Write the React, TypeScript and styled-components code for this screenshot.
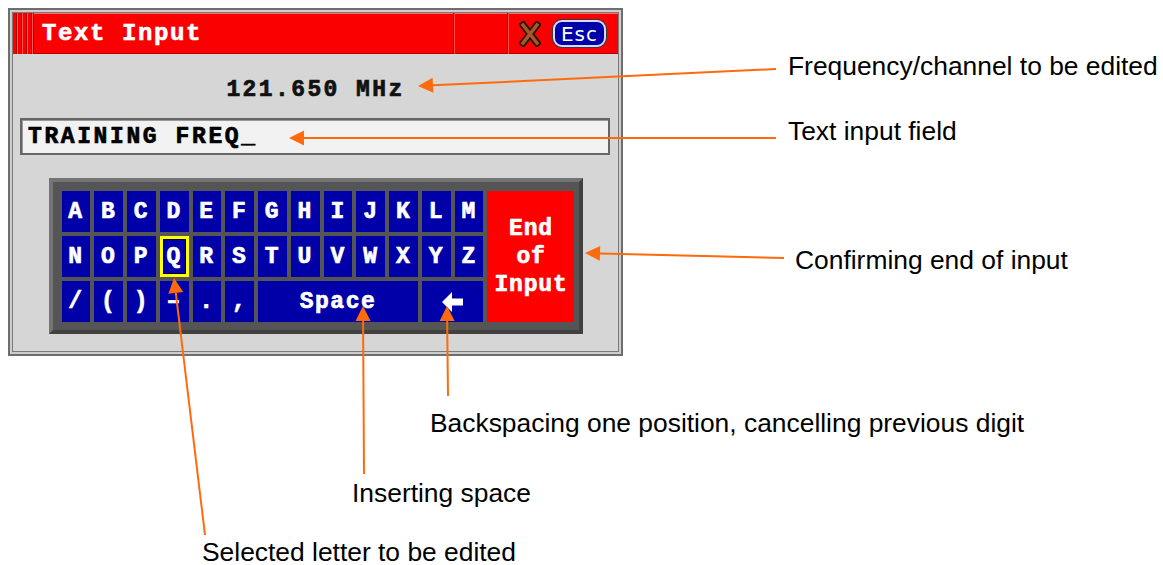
import React from 'react';
import styled, { createGlobalStyle, css } from 'styled-components';

const ORANGE = '#ff6a0d';
const KEY_BLUE = '#0000a8';
const RED = '#fb0000';
const PIXEL_FONT = `"Liberation Mono", "DejaVu Sans Mono", monospace`;

// the device font is a heavy bitmap face, so thicken the mono glyphs a little
const pixelText = css`
  font-family: ${PIXEL_FONT};
  font-weight: bold;
  -webkit-text-stroke: 0.7px currentColor;
`;

const row1 = 'ABCDEFGHIJKLM'.split('');
const row2 = 'NOPQRSTUVWXYZ'.split('');
const row3 = ['/', '(', ')', '–', '.', ','];

type Point = [number, number];
type Callout = { text: string; x: number; y: number; from: Point; to: Point };

// leader lines go from the label (from) to the arrow tip on the screen (to)
const callouts: Callout[] = [
  { text: 'Frequency/channel to be edited', x: 788, y: 51, from: [776, 69], to: [418, 86] },
  { text: 'Text input field', x: 788, y: 116, from: [776, 138], to: [289, 138] },
  { text: 'Confirming end of input', x: 795, y: 245, from: [784, 258], to: [585, 253] },
  {
    text: 'Backspacing one position, cancelling previous digit',
    x: 430,
    y: 408,
    from: [448, 396],
    to: [447, 306],
  },
  { text: 'Inserting space', x: 352, y: 478, from: [364, 474], to: [363, 306] },
  { text: 'Selected letter to be edited', x: 202, y: 537, from: [205, 535], to: [174, 278] },
];

const App: React.FC = () => {
  return (
    <Page>
      <GlobalStyle />
      <Window>
        <TitleBar>
          <Grip />
          <Title>Text Input</Title>
          <TitleSegment />
          <Controls>
            <CloseIcon width="22" height="26" viewBox="0 0 22 26">
              <path d="M4 4 L18 22 M18 4 L4 22" stroke="#2b1406" strokeWidth="7" strokeLinecap="square" />
              <path d="M4 4 L18 22 M18 4 L4 22" stroke="#a5582a" strokeWidth="3.4" strokeLinecap="square" />
            </CloseIcon>
            <EscButton>Esc</EscButton>
          </Controls>
        </TitleBar>
        <Content>
          <Frequency>121.650 MHz</Frequency>
          <InputField>TRAINING FREQ_</InputField>
          <KeyboardFrame>
            <KeyGrid>
              <EndKey>
                <span>End</span>
                <span>of</span>
                <span>Input</span>
              </EndKey>
              {row1.map((k) => (
                <Key key={k}>{k}</Key>
              ))}
              {row2.map((k) => (
                <Key key={k} $selected={k === 'Q'}>
                  {k}
                </Key>
              ))}
              {row3.map((k) => (
                <Key key={k}>{k}</Key>
              ))}
              <Key $span={5}>Space</Key>
              <Key $span={2}>
                <svg width="21" height="20" viewBox="0 0 21 20">
                  <path d="M0 10 L10 0 L10 6.5 L21 6.5 L21 13.5 L10 13.5 L10 20 Z" fill="#fff" />
                </svg>
              </Key>
            </KeyGrid>
          </KeyboardFrame>
        </Content>
      </Window>

      <Leaders width="1163" height="565">
        {callouts.map((c) => (
          <Arrow key={c.text} from={c.from} to={c.to} />
        ))}
      </Leaders>
      {callouts.map((c) => (
        <Label key={c.text} $x={c.x} $y={c.y}>
          {c.text}
        </Label>
      ))}
    </Page>
  );
};

const Arrow: React.FC<{ from: Point; to: Point }> = ({ from, to }) => {
  const [x1, y1] = from;
  const [x2, y2] = to;
  const len = Math.hypot(x2 - x1, y2 - y1);
  const ux = (x2 - x1) / len;
  const uy = (y2 - y1) / len;
  const head = 15;
  const half = 7.5;
  const bx = x2 - ux * head;
  const by = y2 - uy * head;
  const px = -uy;
  const py = ux;
  return (
    <g>
      <line x1={x1} y1={y1} x2={bx} y2={by} stroke={ORANGE} strokeWidth="2" />
      <polygon
        points={`${x2},${y2} ${bx + px * half},${by + py * half} ${bx - px * half},${by - py * half}`}
        fill={ORANGE}
      />
    </g>
  );
};

export default App;

const GlobalStyle = createGlobalStyle`
  html, body {
    margin: 0;
    padding: 0;
    background: #fff;
  }
  body {
    overflow: hidden;
    font-family: "Liberation Sans", Arial, sans-serif;
  }
`;

const Page = styled.div`
  position: relative;
  width: 1163px;
  height: 565px;
  padding: 8px;
  box-sizing: border-box;
  background: #fff;
`;

const Window = styled.div`
  width: 615px;
  height: 348px;
  box-sizing: border-box;
  display: flex;
  flex-direction: column;
  border: 2px solid #6e6e6e;
  padding: 3px;
  background: #d6d6d6;
  box-shadow: inset 0 0 0 2px #cdcdcd, inset 0 0 0 3px #7a7a7a;
`;

const TitleBar = styled.div`
  display: flex;
  height: 41px;
  background: ${RED};
  box-shadow: inset 0 1px 0 #ff6a6a, inset 0 -1px 0 #b80000;
`;

const Grip = styled.div`
  width: 20px;
  border-right: 1px solid #a80000;
  background: repeating-linear-gradient(
    90deg,
    ${RED} 0 3px,
    #b00000 3px 4px,
    #ff5a5a 4px 5px
  );
`;

const Title = styled.div`
  flex: 1;
  display: flex;
  align-items: center;
  padding-left: 8px;
  color: #fff;
  font-size: 24px;
  letter-spacing: 1.6px;
  ${pixelText};
`;

const TitleSegment = styled.div`
  width: 53px;
  border-left: 1px solid #a80000;
  box-shadow: inset 1px 0 0 #ff5050;
`;

const Controls = styled.div`
  width: 111px;
  display: flex;
  align-items: center;
  gap: 12px;
  padding-left: 11px;
  box-sizing: border-box;
  border-left: 1px solid #a80000;
  box-shadow: inset 1px 0 0 #ff5050;
`;

const CloseIcon = styled.svg`
  display: block;
  margin-top: 1px;
`;

const EscButton = styled.span`
  width: 53px;
  height: 27px;
  box-sizing: border-box;
  display: flex;
  align-items: center;
  justify-content: center;
  background: ${KEY_BLUE};
  border: 2px solid #d8d8ff;
  border-radius: 9px;
  box-shadow: 0 0 0 1px #3a3a3a;
  color: #fff;
  font: 20px "DejaVu Sans", sans-serif;
  letter-spacing: 1px;
`;

const Content = styled.div`
  flex: 1;
  display: flex;
  flex-direction: column;
`;

const Frequency = styled.div`
  height: 64px;
  box-sizing: border-box;
  padding-top: 8px;
  display: flex;
  align-items: center;
  justify-content: center;
  color: #111;
  font-size: 23px;
  letter-spacing: 2.4px;
  ${pixelText};
`;

const InputField = styled.div`
  height: 37px;
  margin: 0 8px 0 7px;
  box-sizing: border-box;
  display: flex;
  align-items: center;
  padding-left: 6px;
  background: #f2f2f2;
  border: 2px solid #666;
  box-shadow: inset 1px 1px 0 #9a9a9a;
  color: #000;
  font-size: 23px;
  letter-spacing: 2.6px;
  ${pixelText};
`;

const KeyboardFrame = styled.div`
  align-self: center;
  width: 534px;
  height: 156px;
  margin-top: 23px;
  box-sizing: border-box;
  padding: 9px 4px 8px 9px;
  background: #555;
  border: 4px solid;
  border-color: #747474 #414141 #414141 #747474;
`;

const KeyGrid = styled.div`
  display: grid;
  grid-template-columns: repeat(13, 1fr) 87px;
  grid-template-rows: repeat(3, 41px);
  gap: 4px;
`;

const Key = styled.div<{ $span?: number; $selected?: boolean }>`
  grid-column: span ${(p) => p.$span ?? 1};
  display: flex;
  align-items: center;
  justify-content: center;
  background: ${KEY_BLUE};
  color: #fff;
  font-size: 23px;
  letter-spacing: 1.5px;
  ${pixelText};
  box-shadow: ${(p) => (p.$selected ? 'inset 0 0 0 3px #ffff00, inset 0 0 0 4px #000040' : 'none')};
`;

const EndKey = styled.div`
  grid-column: 14;
  grid-row: 1 / span 3;
  display: flex;
  flex-direction: column;
  align-items: center;
  justify-content: center;
  background: #ff0000;
  color: #fff;
  font-size: 23px;
  line-height: 28px;
  letter-spacing: 0.8px;
  ${pixelText};
`;

const Leaders = styled.svg`
  position: absolute;
  left: 0;
  top: 0;
  pointer-events: none;
`;

const Label = styled.span<{ $x: number; $y: number }>`
  position: absolute;
  left: ${(p) => p.$x}px;
  top: ${(p) => p.$y}px;
  white-space: nowrap;
  color: #000;
  font: 26.4px "Liberation Sans", Arial, sans-serif;
  line-height: 30px;
`;
